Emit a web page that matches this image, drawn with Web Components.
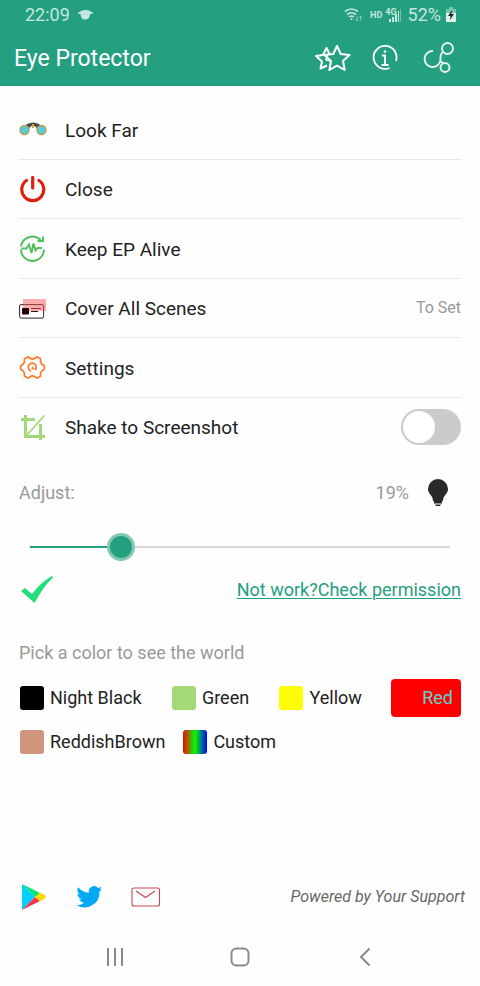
<!DOCTYPE html>
<html lang="en">
<head>
<meta charset="utf-8">
<meta name="viewport" content="width=device-width, initial-scale=1">
<title>Eye Protector</title>
<style>
  body { margin: 0; background: #fefefe; color: #222; font-family: Roboto, "Liberation Sans", sans-serif; font-size: 18px; line-height: 24px; }
</style>
</head>
<body>
<eye-app></eye-app>

<template id="t-app">
  <style>
    :host { display: flex; flex-direction: column; min-height: 100vh; }
    header { background: #249f80; }
    main { padding: 14px 19px 0; }
    .menu { display: grid; grid-auto-rows: 1fr; min-height: 357px; font-size: 19px; }
    footer { margin-top: auto; }
    a { color: #249f80; text-decoration: underline; text-decoration-thickness: 1px; text-underline-offset: 2px; }
    .status { display: flex; align-items: center; justify-content: space-between; padding: 14px 0 0; min-height: 30px; }
    svg { display: block; }
    h2 { margin: 36px 0 0; font-size: 18px; font-weight: 400; color: #999; }
  </style>
  <header>
    <status-bar></status-bar>
    <title-bar>Eye Protector</title-bar>
  </header>
  <main>
    <div class="menu">
      <menu-row>
        <svg slot="icon" width="28" height="28" viewBox="0 0 28 28"><path d="M5 12Q6 8 11 7q3-1 6 0 5 1 6 5l-5 1q-1-3-3-3h-2q-2 0-3 3z" fill="#4b4c4e"/><path d="M13 8h2v4h-2z" fill="#d5a33c"/><circle cx="5.500" cy="14" r="4.500" fill="#54cbe0" stroke="#c0a04c" stroke-width="1.500"/><circle cx="22.500" cy="14" r="4.500" fill="#54cbe0" stroke="#c0a04c" stroke-width="1.500"/></svg>
        Look Far
      </menu-row>
      <menu-row>
        <svg slot="icon" width="28" height="28" viewBox="0 0 28 28" fill="none" stroke="#de1f0d" stroke-width="3.200" stroke-linecap="round"><path d="M7.500 4.500A11 11 0 1 0 20 4.500M13.700 1.500v10.500"/></svg>
        Close
      </menu-row>
      <menu-row>
        <svg slot="icon" width="28" height="28" viewBox="0 0 28 28" fill="none" stroke="#53bd5a" stroke-width="1.900"><path d="M2 11.500A11.500 11.500 0 0 1 21.500 5M2 14.500a11.500 11.500 0 0 0 23 0M24 1.500v4.500h-5.500M2.500 13.500h5l2.500-4L12.500 18l2-9.500 2 7 2-2.500H23"/></svg>
        Keep EP Alive
      </menu-row>
      <menu-row>
        <svg slot="icon" width="28" height="28" viewBox="0 0 28 28"><rect x=".6" y="9.600" width="24" height="13.500" rx="1.500" fill="#fff" stroke="#222"/><path d="M12 13.500h10M12 16.500h7" stroke="#222"/><rect x="4" y="4" width="23" height="12" fill="#fa5458" opacity=".48"/><rect x="3" y="13" width="7" height="6.500" rx="1" fill="#240003"/></svg>
        Cover All Scenes
        <span slot="end">To Set</span>
      </menu-row>
      <menu-row>
        <svg slot="icon" width="28" height="28" viewBox="0 0 28 28" fill="none" stroke="#fa8035" stroke-width="1.800" stroke-linejoin="round" stroke-linecap="round"><path d="M8.500 3Q10 3 10.500 4q3 2 6 0 .5-1 2-1l2.500 1.500q1 .8.500 2 0 3 2.500 4.500 1 0 1.300 1v3q-.3 1-1.300 1-2.500 1.500-2.500 4.500.5 1.200-.5 2L18.500 24q-1.500 0-2-1-3-2-6 0-.5 1-2 1L6 22.500q-1-.8-.5-2 0-3-2.500-4.500-1 0-1.300-1v-3Q2 11 3 11q2.500-1.500 2.500-4.500-.5-1.200.5-2z"/><path d="M11.500 16.800a4 4 0 1 1 5-1.300M13.500 13.500v1h1"/></svg>
        Settings
      </menu-row>
      <menu-row last>
        <svg slot="icon" width="28" height="28" viewBox="0 0 28 28" fill="none" stroke="#a3d77b" stroke-width="3"><path d="M6.500 1v21.500H26M2 5.500h14M21.500 10v16"/><path d="M8 21L25.500 1.500" stroke-width="1.800"/></svg>
        Shake to Screenshot
        <toggle-switch slot="end" label="Shake to Screenshot"></toggle-switch>
      </menu-row>
    </div>
    <level-slider></level-slider>
    <div class="status">
      <svg width="36" height="28" viewBox="0 0 36 28" role="img" aria-label="Running"><path d="M2 15l4-3 7 6Q22 6 33 0l1 1.500Q24 11 15.500 27z" fill="#22df7c"/></svg>
      <a href="#permission">Not work?Check permission</a>
    </div>
    <h2>Pick a color to see the world</h2>
    <color-picker></color-picker>
  </main>
  <footer>
    <support-bar>Powered by Your Support</support-bar>
    <nav-bar></nav-bar>
  </footer>
</template>

<template id="t-status">
  <style>
    :host { display: flex; align-items: center; height: 29px; padding: 0 24px 0 25px; color: #c5e8de; font-size: 18px; }
    svg { display: block; flex: none; }
    .eye { margin-left: 7px; margin-right: auto; }
    .hd { font-size: 9px; font-weight: 700; margin: 0 3px 0 7px; }
    .sig { display: grid; grid-template-columns: auto auto; }
    .four { font-size: 9px; font-weight: 700; line-height: 9px; margin-right: -8px; align-self: start; }
    .pct { margin: 0 5px 0 7px; }
  </style>
  <span>22:09</span>
  <svg class="eye" width="17" height="12" viewBox="0 0 17 12" fill="currentColor"><path d="M.5 4.500Q3.500 1 8.500 1t8 3.500L13 5q0 5-4.500 5.500T3.500 5z"/></svg>
  <svg width="19" height="17" viewBox="0 0 19 17" fill="none" stroke="currentColor" stroke-width="1.600"><path d="M1 5.500Q7.500.5 14 5.500M3 8.500q4.500-3.500 9 0M5 11q2.500-2 5 0"/><circle cx="7.500" cy="13" r="1" fill="currentColor" stroke="none"/><path d="M13 10v5m-1.500-1.500L13 15l1.500-1.500M16.500 15v-5M15 11.500l1.500-1.500 1.500 1.500" stroke-width="1" opacity=".5"/></svg>
  <span class="hd">HD</span>
  <span class="sig"><span class="four">4G</span><svg width="12" height="14" viewBox="0 0 12 14" fill="currentColor"><path d="M0 11h2v3H0zM3 9h2v5H3zM6 6h2v8H6zM9 3h1v11H9z"/><path d="M11 1h1v13h-1z" opacity=".5"/></svg></span>
  <span class="pct">52%</span>
  <svg width="10" height="15" viewBox="0 0 10 15"><path d="M3 0h4v2h3v4H0V2h3z" fill="#78c3af"/><path d="M0 6h10v9H0z" fill="#dff2ed"/><path d="M6 3L2 9h2.500l-.5 4 4-6H5.500z" fill="#202b28"/></svg>
</template>

<template id="t-title">
  <style>
    :host { display: flex; align-items: center; height: 57px; padding: 0 23px 0 14px; color: #fff; }
    h1 { margin: 0 auto 0 0; padding-top: 2px; font-size: 23px; line-height: 30px; font-weight: 400; }
    button { background: none; border: 0; padding: 0; margin-left: 21px; color: inherit; }
    svg { display: block; }
  </style>
  <h1><slot></slot></h1>
  <button aria-label="Rate"><svg width="38" height="30" viewBox="0 0 38 30" fill="none" stroke="currentColor" stroke-width="2" stroke-linejoin="round"><path d="M14 22.500l-6.500 3 1.500-7L3 13l7-1 3.500-7 3 6"/><path d="M14 12l-1 5 5 1" stroke-width="1.500"/><path d="M24 3l3.700 8 8.800 1-6.500 6 1.700 9-7.700-4.400L16.300 27 18 18l-6.500-6 8.800-1z"/></svg></button>
  <button aria-label="Information"><svg width="26" height="28" viewBox="0 0 26 28" fill="none" stroke="currentColor" stroke-width="1.800"><path d="M24 17A11.500 11.500 0 1 0 17.500 24M10 11.500H13V21M9.500 21h7"/><circle cx="13" cy="7.500" r="1.300" fill="currentColor" stroke="none"/></svg></button>
  <button aria-label="Share"><svg width="38" height="34" viewBox="0 0 38 34" fill="none" stroke="currentColor" stroke-width="1.900" opacity=".88"><path d="M14 10a8 8 0 1 0 7.500 9Q21 13 24 11M21 20l3 2"/><circle cx="28.500" cy="7.500" r="5.500"/><circle cx="26" cy="26.500" r="4.500"/></svg></button>
</template>

<template id="t-row">
  <style>
    :host { display: flex; align-items: center; box-sizing: border-box; border-bottom: 1px solid #e9e9e9; gap: 18px; }
    :host([last]) { border-bottom-color: transparent; }
    button { flex: 1; align-self: stretch; display: flex; align-items: center; gap: 18px; background: none; border: 0; padding: 2px 0 0; font: inherit; color: inherit; text-align: left; }
    .text { padding-top: 1px; }
    .end { font-size: 16px; color: #999; padding-top: 1px; }
  </style>
  <button><slot name="icon"></slot><span class="text"><slot></slot></span></button>
  <span class="end"><slot name="end"></slot></span>
</template>

<template id="t-toggle">
  <style>
    :host { display: block; }
    input { appearance: none; display: block; margin: 0; width: 60px; height: 36px; padding: 2px; box-sizing: border-box; border-radius: 18px; background: #cbcbcb; }
    input::before { content: ""; display: block; width: 32px; height: 32px; border-radius: 50%; background: #fff; }
    input:checked { background: #249f80; }
    input:checked::before { margin-left: auto; }
  </style>
  <input type="checkbox" role="switch">
</template>

<template id="t-slider">
  <style>
    :host { display: block; }
    .top { display: flex; align-items: center; height: 40px; margin-top: 16px; color: #999; }
    label { margin-right: auto; }
    .top svg { display: block; margin: 0 12px 0 18px; }
    input { appearance: none; display: block; box-sizing: border-box; width: calc(100% - 22px); height: 28px; margin: 20px 11px 0; background: none; --p: calc(14px + (100% - 28px) * .196); }
    input::-webkit-slider-runnable-track { height: 2px; background: linear-gradient(to right, #249f80 var(--p), #d8d8d8 var(--p)); }
    input::-webkit-slider-thumb { appearance: none; box-sizing: border-box; width: 28px; height: 28px; margin-top: -13px; border-radius: 50%; border: 3px solid #84c8b5; background: #249f80; }
  </style>
  <div class="top">
    <label for="level">Adjust:</label>
    <output for="level">19%</output>
    <svg width="22" height="28" viewBox="0 0 22 28" fill="#292929"><path d="M11 0a10 10 0 0 1 10 10c0 5-5 6-5 12H6C6 16 1 15 1 10A10 10 0 0 1 11 0z"/><path d="M7 22h8v2.500H7zM8 25.500h6L13 27H9z"/></svg>
  </div>
  <input id="level" type="range" min="0" max="255" value="50">
</template>

<template id="t-colors">
  <style>
    :host { display: block; margin-top: 14px; }
    .line { display: flex; align-items: center; height: 38px; }
    .line + .line { margin-top: 6px; }
    .first { justify-content: space-between; }
    .second { gap: 16px; }
    label { display: flex; align-items: center; gap: 6px; padding: 0 1px; }
    input { appearance: none; margin: 0; width: 24px; height: 24px; border-radius: 3px; background: var(--c); }
    label:has(:checked) { height: 38px; box-sizing: border-box; padding: 0 8px 0 1px; border-radius: 4px; background: var(--c); color: #5cd3d0; }
  </style>
  <div class="line first">
    <label style="--c:#000"><input type="radio" name="color">Night Black</label>
    <label style="--c:#a3d977"><input type="radio" name="color">Green</label>
    <label style="--c:#ff0"><input type="radio" name="color">Yellow</label>
    <label style="--c:#f00"><input type="radio" name="color" checked>Red</label>
  </div>
  <div class="line second">
    <label style="--c:#cf957e"><input type="radio" name="color">ReddishBrown</label>
    <label style="--c:linear-gradient(to right,#f00,#0f0 50%,#00f)"><input type="radio" name="color">Custom</label>
  </div>
</template>

<template id="t-support">
  <style>
    :host { display: flex; align-items: center; height: 36px; padding: 0 15px 0 19px; gap: 28px; font-size: 16px; font-style: italic; color: #666; }
    svg { display: block; }
    span { margin-left: auto; }
  </style>
  <a href="#play" aria-label="Google Play"><svg width="28" height="28" viewBox="0 0 28 28"><path d="M3 1v26l13-13z" fill="#00d0ff"/><path d="M3 1l18 9-5 4z" fill="#00e676"/><path d="M3 27l18-9-5-4z" fill="#f5334b"/><path d="M21 9.500l5 3q1.500 1.500 0 3l-5 3-5-4.500z" fill="#ffd800"/></svg></a>
  <a href="#twitter" aria-label="Twitter"><svg width="28" height="28" viewBox="0 0 24 24" fill="#03a9f4"><path d="M23.300 4.900c-.8.400-1.700.6-2.600.7.900-.5 1.700-1.400 2-2.400-.9.500-1.900.9-2.900 1.100A4.500 4.500 0 0 0 12 8.400C8.200 8.200 4.900 6.400 2.700 3.700a4.500 4.500 0 0 0 1.400 6.100c-.7 0-1.400-.2-2.100-.6v.1c0 2.200 1.600 4 3.700 4.400-.7.200-1.400.2-2.100.1.600 1.800 2.300 3.100 4.300 3.200A9.200 9.200 0 0 1 1.200 18.900a12.900 12.900 0 0 0 19.800-11.500c.9-.7 1.700-1.500 2.300-2.500z"/></svg></a>
  <a href="#mail" aria-label="Mail"><svg width="30" height="28" viewBox="0 0 30 28" fill="none" stroke="#c4474b" stroke-width="1.100"><rect x="1" y="5" width="27.500" height="18" rx="2"/><path d="M5 8l9.500 6.500L24 8"/></svg></a>
  <span><slot></slot></span>
</template>

<template id="t-nav">
  <style>
    :host { display: grid; grid-template-columns: repeat(3, 125px); justify-content: center; height: 71px; padding: 13px 0 0; box-sizing: border-box; }
    button { background: none; border: 0; padding: 0; display: grid; place-items: center; color: #8a8a8a; }
  </style>
  <button aria-label="Recent apps"><svg width="20" height="20" viewBox="0 0 20 20" stroke="currentColor" stroke-width="2" fill="none"><path d="M3 1v18M10 1v18M17 1v18"/></svg></button>
  <button aria-label="Home"><svg width="20" height="20" viewBox="0 0 20 20" stroke="currentColor" stroke-width="2" fill="none"><rect x="1.500" y="1.500" width="17" height="17" rx="5"/></svg></button>
  <button aria-label="Back"><svg width="20" height="20" viewBox="0 0 20 20" stroke="currentColor" stroke-width="2" fill="none"><path d="M14.500 1.500L6 10l8.500 8.500"/></svg></button>
</template>

<script>
  class Part extends HTMLElement {
    constructor() {
      super();
      this.attachShadow({ mode: "open" }).append(
        document.getElementById(this.constructor.template).content.cloneNode(true));
    }
  }
  class StatusBar extends Part { static template = "t-status"; }
  class TitleBar extends Part { static template = "t-title"; }
  class MenuRow extends Part { static template = "t-row"; }
  class ToggleSwitch extends Part {
    static template = "t-toggle";
    connectedCallback() {
      this.shadowRoot.querySelector("input").setAttribute("aria-label", this.getAttribute("label"));
    }
  }
  class LevelSlider extends Part {
    static template = "t-slider";
    connectedCallback() {
      const input = this.shadowRoot.querySelector("input");
      const output = this.shadowRoot.querySelector("output");
      input.addEventListener("input", () => {
        const part = input.value / 255;
        output.textContent = Math.floor(part * 100) + "%";
        input.style.setProperty("--p", `calc(14px + (100% - 28px) * ${part})`);
      });
    }
  }
  class ColorPicker extends Part { static template = "t-colors"; }
  class SupportBar extends Part { static template = "t-support"; }
  class NavBar extends Part { static template = "t-nav"; }
  class EyeApp extends Part { static template = "t-app"; }
  customElements.define("status-bar", StatusBar);
  customElements.define("title-bar", TitleBar);
  customElements.define("menu-row", MenuRow);
  customElements.define("toggle-switch", ToggleSwitch);
  customElements.define("level-slider", LevelSlider);
  customElements.define("color-picker", ColorPicker);
  customElements.define("support-bar", SupportBar);
  customElements.define("nav-bar", NavBar);
  customElements.define("eye-app", EyeApp);
</script>
</body>
</html>
